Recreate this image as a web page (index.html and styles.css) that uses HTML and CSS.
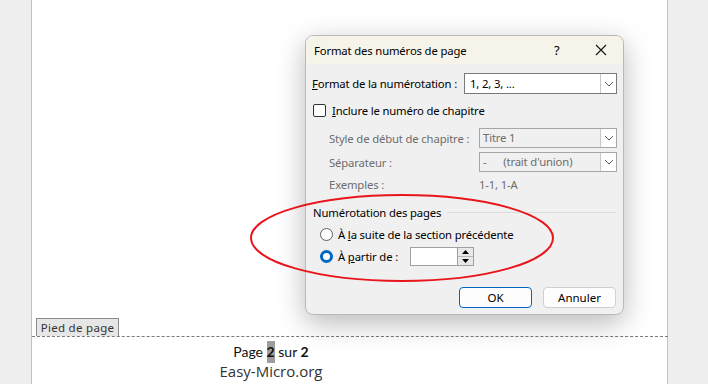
FILE: index.html
```html
<!DOCTYPE html>
<html lang="fr">
<head>
    <meta charset="UTF-8">
    <title>Format des numéros de page</title>
    <link rel="stylesheet" href="styles.css">
</head>
<body>
    <div class="workspace">
        <div class="page">
            <div class="page-body"></div>
            <div class="footer-zone">
                <div class="footer-tab">Pied de page</div>
                <div class="footer-text">
                    <div class="footer-line">Page <b class="field">2</b> sur <b>2</b></div>
                    <div class="footer-site">Easy-Micro.org</div>
                </div>
            </div>
        </div>
    </div>

    <div class="dialog">
        <div class="dialog-title">
            <span class="title-text">Format des numéros de page</span>
            <span class="title-help">?</span>
            <svg class="title-close" width="12" height="12" viewBox="0 0 12 12"><path d="M1 1 L11 11 M11 1 L1 11" stroke="#1a1a1a" stroke-width="1.2" fill="none"/></svg>
        </div>
        <div class="dialog-body">
            <div class="row row-format">
                <span class="label"><u>F</u>ormat de la numérotation :</span>
                <div class="select select-format">
                    <span class="select-value">1, 2, 3, ...</span>
                    <span class="select-arrow"><svg width="10" height="6" viewBox="0 0 10 6"><path d="M1 1 L5 5 L9 1" stroke="#606060" stroke-width="1" fill="none"/></svg></span>
                </div>
            </div>
            <div class="row row-check">
                <span class="checkbox"></span>
                <span class="label"><u>I</u>nclure le numéro de chapitre</span>
            </div>
            <div class="row row-indent row-style">
                <span class="label disabled">Style de début de chapitre :</span>
                <div class="select select-disabled">
                    <span class="select-value">Titre 1</span>
                    <span class="select-arrow"><svg width="10" height="6" viewBox="0 0 10 6"><path d="M1 1 L5 5 L9 1" stroke="#606060" stroke-width="1" fill="none"/></svg></span>
                </div>
            </div>
            <div class="row row-indent row-sep">
                <span class="label disabled">Séparateur :</span>
                <div class="select select-disabled">
                    <span class="select-value">-&nbsp;&nbsp;&nbsp;&nbsp;&nbsp;&nbsp;(trait d'union)</span>
                    <span class="select-arrow"><svg width="10" height="6" viewBox="0 0 10 6"><path d="M1 1 L5 5 L9 1" stroke="#606060" stroke-width="1" fill="none"/></svg></span>
                </div>
            </div>
            <div class="row row-indent row-example">
                <span class="label disabled">Exemples :</span>
                <span class="example-value disabled">1-1, 1-A</span>
            </div>
            <div class="group-head">
                <span class="label">Numérotation des pages</span>
                <span class="group-line"></span>
            </div>
            <div class="row row-radio row-radio1">
                <span class="radio"></span>
                <span class="label">À <u>l</u>a suite de la section précédente</span>
            </div>
            <div class="row row-radio row-radio2">
                <span class="radio radio-on"></span>
                <span class="label label-start">À <u>p</u>artir de :</span>
                <div class="spin">
                    <span class="spin-input"></span>
                    <span class="spin-buttons">
                        <span class="spin-btn"><svg width="7" height="4" viewBox="0 0 7 4"><path d="M0 4 L3.5 0 L7 4 Z" fill="#000"/></svg></span>
                        <span class="spin-btn"><svg width="7" height="4" viewBox="0 0 7 4"><path d="M0 0 L3.5 4 L7 0 Z" fill="#000"/></svg></span>
                    </span>
                </div>
            </div>
            <div class="buttons">
                <button class="btn btn-default">OK</button>
                <button class="btn">Annuler</button>
            </div>
        </div>
    </div>

    <svg class="annotation" width="320" height="100" viewBox="0 0 320 100">
        <ellipse cx="152" cy="44" rx="151" ry="43" stroke="#e8161c" stroke-width="2" fill="none"/>
    </svg>
</body>
</html>
```

FILE: styles.css
```css
/* Fond gris de Word autour de la page */
body {
    margin: 0;
    background-color: #eeeeee;
    font-family: "Noto Sans", sans-serif;
    font-size: 11.3px;
    letter-spacing: -0.15px;
    color: #000;
    overflow: hidden;
}

.workspace {
    height: 384px;
    padding-left: 31px;
}

.page {
    width: 635px;
    height: 384px;
    background-color: #ffffff;
    border-left: 1px solid #c3c3c3;
    border-right: 1px solid #c3c3c3;
    display: flex;
    flex-direction: column;
}

.page-body {
    height: 318px;
}

.footer-zone {
    flex: 1;
}

.footer-tab {
    margin-left: 4px;
    width: 81px;
    height: 17px;
    border: 1px solid #8c8c8c;
    border-bottom: none;
    background-color: #e6e6e6;
    color: #333;
    font-size: 11.5px;
    line-height: 17px;
    text-align: center;
    letter-spacing: 0.3px;
}

.footer-text {
    border-top: 1px dashed #7a7a7a;
    padding-top: 6px;
    width: 636px;
    box-sizing: border-box;
    padding-right: 158px;
    text-align: center;
    font-family: "Open Sans", sans-serif;
    letter-spacing: 0;
}

.footer-line {
    font-family: "Lato", sans-serif;
    font-size: 14px;
    line-height: 18px;
    color: #111;
}

.footer-line b {
    font-weight: 700;
}

.field {
    background-color: #9d9d9d;
    padding: 2px 0 3px;
}

.footer-site {
    font-size: 15px;
    line-height: 20px;
    color: #333;
}

/* Boîte de dialogue */
.dialog {
    position: absolute;
    left: 305px;
    top: 35px;
    width: 319px;
    height: 280px;
    background-color: #f0f0f0;
    border: 1px solid #b9b9b9;
    border-radius: 8px;
    box-sizing: border-box;
    box-shadow: 0 8px 28px rgba(0, 0, 0, 0.28);
    overflow: hidden;
}

.dialog-title {
    height: 28px;
    background-color: #f6f3e9;
    display: flex;
    align-items: center;
    padding-left: 8px;
}

.title-text {
    flex: 1;
}

.title-help {
    width: 14px;
    margin-right: 27px;
    font-size: 13px;
}

.title-close {
    margin-right: 16px;
}

.dialog-body {
    padding: 9px 6px 0 6px;
}

.row {
    display: flex;
    align-items: center;
}

.label {
    white-space: nowrap;
}

.disabled {
    color: #6d6d6d;
}

.row-format {
    height: 21px;
}

.row-format .label {
    width: 152px;
}

.select {
    display: flex;
    height: 21px;
    box-sizing: border-box;
    border: 1px solid #7a7a7a;
    background-color: #ffffff;
}

.select-format {
    width: 153px;
}

.select-value {
    flex: 1;
    padding-left: 5px;
    line-height: 19px;
}

.select-arrow {
    width: 15px;
    border-left: 1px solid #c8c8c8;
    background-color: #ffffff;
    display: flex;
    align-items: center;
    justify-content: center;
}

.select-disabled {
    width: 138px;
    height: 20px;
    border-color: #a6a6a6;
    background-color: #f0f0f0;
    color: #6d6d6d;
}

.select-disabled .select-value {
    line-height: 18px;
    padding-left: 3px;
}

.row-check {
    height: 22px;
    margin-top: 5px;
}

.checkbox {
    width: 11px;
    height: 11px;
    border: 1px solid #333;
    border-radius: 2px;
    background-color: #fff;
    margin-right: 6px;
    margin-left: 1px;
}

.row-indent {
    padding-left: 17px;
}

.row-indent .label {
    width: 150px;
}

.row-style {
    height: 20px;
    margin-top: 7px;
}

.row-sep {
    height: 20px;
    margin-top: 4px;
}

.row-example {
    height: 16px;
    margin-top: 4px;
}

.group-head {
    display: flex;
    align-items: center;
    height: 16px;
    margin-top: 12px;
    padding-left: 1px;
}

.group-line {
    flex: 1;
    height: 1px;
    background-color: #dcdcdc;
    margin-left: 6px;
    margin-right: 1px;
}

.row-radio {
    padding-left: 8px;
}

.row-radio1 {
    height: 16px;
    margin-top: 6px;
}

.row-radio2 {
    height: 20px;
    margin-top: 4px;
}

.radio {
    width: 11px;
    height: 11px;
    border: 1px solid #5c5c5c;
    border-radius: 50%;
    background-color: #fff;
    margin-right: 5px;
}

.radio-on {
    width: 7px;
    height: 7px;
    border: 3px solid #0067c0;
}

.label-start {
    width: 72px;
}

.spin {
    display: flex;
    width: 64px;
    height: 19px;
    box-sizing: border-box;
    border: 1px solid #a0a0a0;
    background-color: #fff;
}

.spin-input {
    flex: 1;
}

.spin-buttons {
    width: 15px;
    display: flex;
    flex-direction: column;
    border-left: 1px solid #a0a0a0;
}

.spin-btn {
    flex: 1;
    display: flex;
    align-items: center;
    justify-content: center;
    background-color: #e8e8e8;
    border-bottom: 1px solid #b8b8b8;
}

.spin-btn:last-child {
    border-bottom: none;
}

.buttons {
    display: flex;
    justify-content: flex-end;
    gap: 11px;
    margin-top: 21px;
    padding-right: 1px;
}

.btn {
    width: 73px;
    height: 21px;
    font-family: "Noto Sans", sans-serif;
    font-size: 11.5px;
    background-color: #fdfdfd;
    border: 1px solid #d0d0d0;
    border-radius: 4px;
    padding: 0;
    color: #000;
}

.btn-default {
    border: 1px solid #0067c0;
}

/* Annotation rouge par-dessus */
.annotation {
    position: absolute;
    left: 250px;
    top: 194px;
}
```
